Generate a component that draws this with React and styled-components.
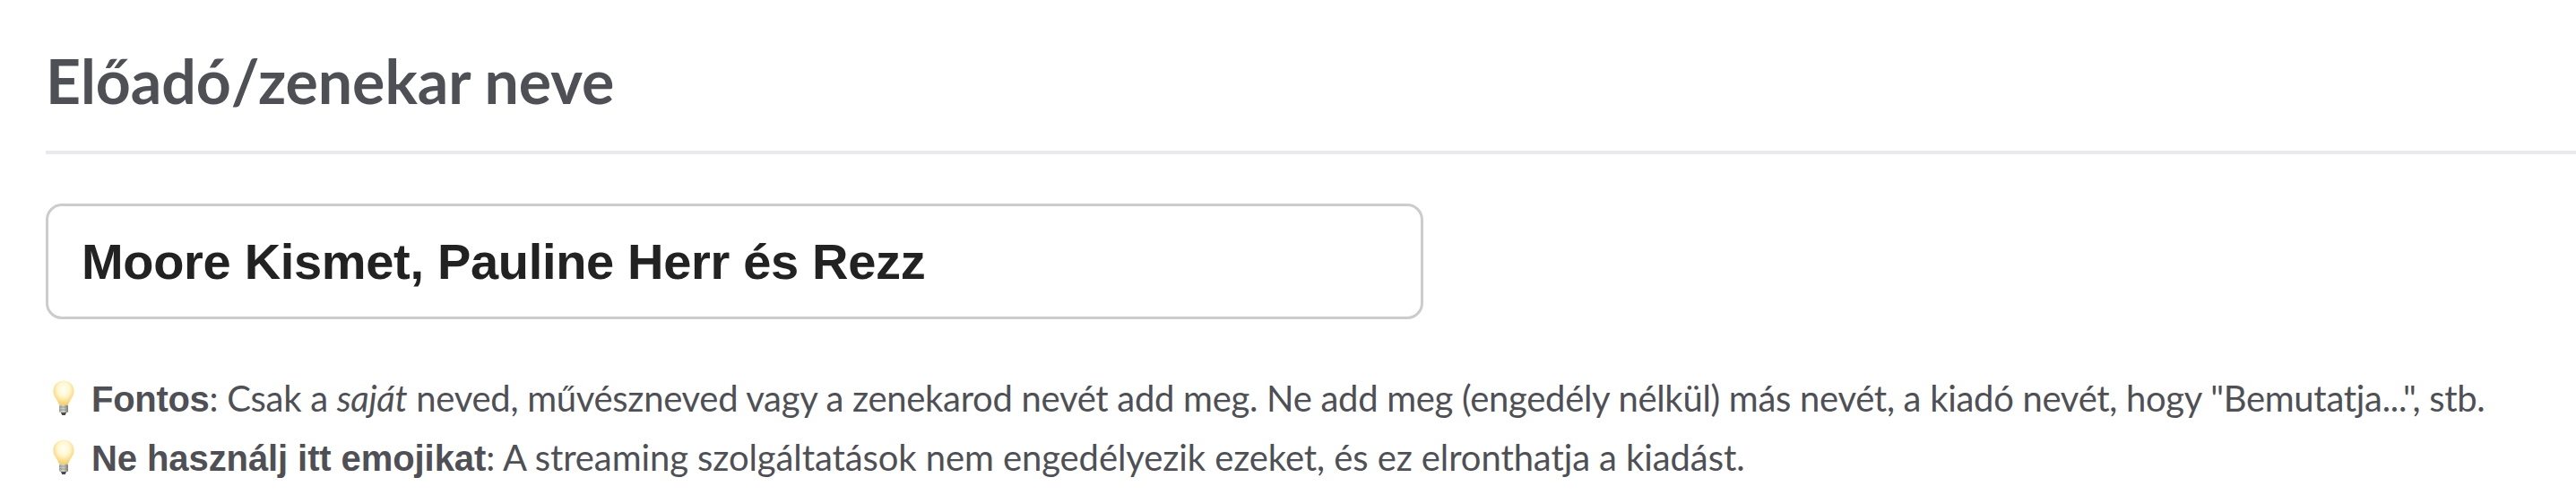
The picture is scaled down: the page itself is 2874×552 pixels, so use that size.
import React from "react";
import styled, { createGlobalStyle } from "styled-components";

const GlobalStyle = createGlobalStyle`
    html, body {
        margin: 0;
        background: #fff;
    }
`;

function Bulb() {
    return (
        <BulbIcon viewBox="0 0 24 40" aria-hidden="true">
            <defs>
                <radialGradient id="glass" cx="50%" cy="36%" r="58%">
                    <stop offset="0%" stopColor="#fffef4" />
                    <stop offset="50%" stopColor="#fff7d2" />
                    <stop offset="100%" stopColor="#f9d26e" />
                </radialGradient>
                <linearGradient id="screw" x1="0" y1="0" x2="1" y2="0">
                    <stop offset="0%" stopColor="#a9a9a4" />
                    <stop offset="50%" stopColor="#d6d6d0" />
                    <stop offset="100%" stopColor="#77776f" />
                </linearGradient>
            </defs>
            <path
                d="M12 0.5C5.4 0.5 0.4 5.5 0.4 12c0 3.9 1.7 6.5 3.5 9.2 1.3 2 2.5 4 3 6.6h10.2c.5-2.6 1.7-4.6 3-6.6 1.8-2.7 3.5-5.3 3.5-9.2C23.6 5.5 18.6 0.5 12 0.5z"
                fill="url(#glass)"
            />
            <rect x="7" y="27.5" width="10" height="8.5" rx="1.5" fill="url(#screw)" />
            <path d="M7 30h10M7 33h10" stroke="#8d8d86" strokeWidth="0.8" />
            <path d="M9 36h6l-1.2 3h-3.6z" fill="#4a4a48" />
        </BulbIcon>
    );
}

function App() {
    return (
        <>
            <GlobalStyle />
            <Page>
                <Heading>Előadó/zenekar neve</Heading>
                <Divider />
                <NameInput readOnly value="Moore Kismet, Pauline Herr és Rezz" />
                <Hints>
                    <Hint $tracking="-0.3px">
                        <Bulb />
                        <span>
                            <Strong>Fontos</Strong>: Csak a <em>saját</em> neved, művészneved vagy a zenekarod nevét add meg. Ne add meg (engedély nélkül) más nevét, a kiadó nevét, hogy "Bemutatja...", stb.
                        </span>
                    </Hint>
                    <Hint $tracking="-0.09px">
                        <Bulb />
                        <span>
                            <Strong>Ne használj itt emojikat</Strong>: A streaming szolgáltatások nem engedélyezik ezeket, és ez elronthatja a kiadást.
                        </span>
                    </Hint>
                </Hints>
            </Page>
        </>
    );
}

const Page = styled.div`
    height: 552px;
    overflow: hidden;
    padding-left: 51px;
    box-sizing: border-box;
    background: #fff;
    font-family: "Lato", sans-serif;
    color: #4f5056;
`;

const Heading = styled.h1`
    margin: 0;
    padding-top: 48px;
    font-size: 68px;
    line-height: 84px;
    font-weight: 700;
    letter-spacing: -0.05px;
    color: #4f5056;
`;

const Divider = styled.div`
    height: 4px;
    margin-top: 36px;
    background: #eaeaee;
`;

const NameInput = styled.input`
    display: block;
    box-sizing: border-box;
    width: 1537px;
    height: 129px;
    margin-top: 55px;
    padding: 0 37px;
    border: 3px solid #cccccc;
    border-radius: 18px;
    outline: none;
    background: #fff;
    font-family: "Liberation Sans", Arial, sans-serif;
    font-size: 56px;
    font-weight: 700;
    letter-spacing: -0.32px;
    color: #222222;
`;

const Hints = styled.div`
    margin-top: 55px;
    display: flex;
    flex-direction: column;
`;

const Hint = styled.div`
    display: flex;
    align-items: center;
    gap: 19px;
    height: 66px;
    padding-left: 8px;
    font-size: 40px;
    letter-spacing: ${(props) => props.$tracking};
    white-space: nowrap;

    em {
        font-style: italic;
    }
`;

const BulbIcon = styled.svg`
    width: 24px;
    height: 40px;
    flex: none;
`;

const Strong = styled.strong`
    font-family: "Liberation Sans", Arial, sans-serif;
    font-weight: 700;
`;

export default App;
